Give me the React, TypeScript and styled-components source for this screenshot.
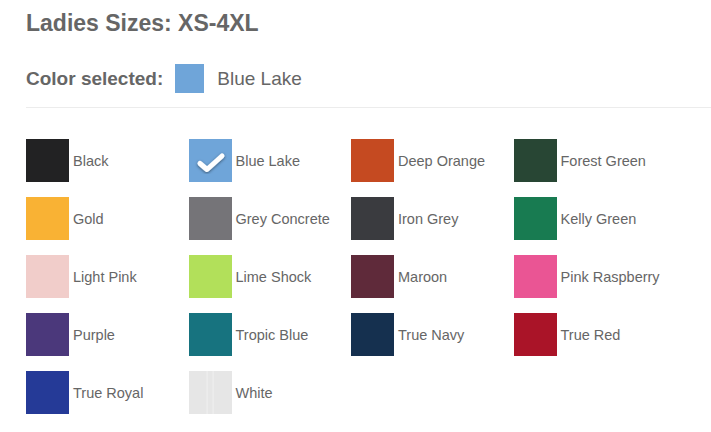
import * as React from 'react';
import styled, { createGlobalStyle } from 'styled-components';

const GlobalStyle = createGlobalStyle`
  html, body {
    margin: 0;
    padding: 0;
    background: #fff;
    font-family: "Liberation Sans", Arial, sans-serif;
    color: #666;
  }
`;

/** Page Wrapper */
const Page = styled.div`
  padding: 9px 0 0 26px;
  overflow: hidden;
`;

const Title = styled.h2`
  margin: 0;
  font-size: 23px;
  line-height: 28px;
  font-weight: bold;
  color: #666;
`;

const SelectedRow = styled.div`
  display: flex;
  align-items: center;
  margin-top: 27px;
  padding-bottom: 14px;
  border-bottom: 1px solid #ececec;
  margin-right: -20px;
`;

const SelectedLabel = styled.strong`
  font-size: 19px;
  color: #666;
`;

const SelectedChip = styled.span<{ $color: string }>`
  display: inline-block;
  width: 29px;
  height: 29px;
  margin: 0 13px 0 12px;
  background: ${(props) => props.$color};
`;

const SelectedName = styled.span`
  font-size: 19px;
  color: #666;
`;

const Grid = styled.ul`
  list-style: none;
  margin: 31px 0 0;
  padding: 0;
  width: 650px;
  display: grid;
  grid-template-columns: repeat(4, 1fr);
  row-gap: 15px;
`;

const Item = styled.li`
  display: flex;
  align-items: center;
  gap: 4px;
  cursor: pointer;
`;

const Swatch = styled.span<{ $color: string; $textured?: boolean }>`
  display: inline-flex;
  align-items: center;
  justify-content: center;
  width: 43px;
  height: 43px;
  flex-shrink: 0;
  background: ${(props) => props.$color};
  ${(props) =>
    props.$textured &&
    `background-image: linear-gradient(90deg, transparent 40%, rgba(255,255,255,0.5) 42%, transparent 44%, transparent 54%, rgba(255,255,255,0.5) 56%, transparent 58%);`}
`;

const Label = styled.span`
  font-size: 14.5px;
  color: #666;
  white-space: nowrap;
`;

interface IColor {
  name: string;
  hex: string;
  textured?: boolean;
}

const colors: IColor[] = [
  { name: 'Black', hex: '#222223' },
  { name: 'Blue Lake', hex: '#6fa5d9' },
  { name: 'Deep Orange', hex: '#c54a21' },
  { name: 'Forest Green', hex: '#284634' },
  { name: 'Gold', hex: '#f9b234' },
  { name: 'Grey Concrete', hex: '#757478' },
  { name: 'Iron Grey', hex: '#3a3b3f' },
  { name: 'Kelly Green', hex: '#187b51' },
  { name: 'Light Pink', hex: '#f1cdca' },
  { name: 'Lime Shock', hex: '#b2e05a' },
  { name: 'Maroon', hex: '#5f2a3a' },
  { name: 'Pink Raspberry', hex: '#ea5594' },
  { name: 'Purple', hex: '#4b387b' },
  { name: 'Tropic Blue', hex: '#17737f' },
  { name: 'True Navy', hex: '#15304f' },
  { name: 'True Red', hex: '#aa1428' },
  { name: 'True Royal', hex: '#253a97' },
  { name: 'White', hex: '#e6e6e6', textured: true },
];

const CheckIcon = () => (
  <svg width="34" height="28" viewBox="0 0 34 28" style={{ marginTop: 4 }}>
    <defs>
      <filter id="shadow" x="-30%" y="-30%" width="160%" height="160%">
        <feDropShadow dx="0" dy="1" stdDeviation="1.4" floodColor="#000" floodOpacity="0.5" />
      </filter>
    </defs>
    <path
      d="M7 14.5 L14 20.5 L29 7"
      fill="none"
      stroke="#fff"
      strokeWidth="5"
      strokeLinecap="round"
      strokeLinejoin="round"
      filter="url(#shadow)"
    />
  </svg>
);

const App: React.FC = () => {
  const [selected, setSelected] = React.useState('Blue Lake');
  const current = colors.find((c) => c.name === selected) || colors[1];

  return (
    <Page>
      <GlobalStyle />
      <Title>Ladies Sizes: XS-4XL</Title>
      <SelectedRow>
        <SelectedLabel>Color selected:</SelectedLabel>
        <SelectedChip $color={current.hex} />
        <SelectedName>{current.name}</SelectedName>
      </SelectedRow>
      <Grid>
        {colors.map((c) => (
          <Item key={c.name} onClick={() => setSelected(c.name)}>
            <Swatch $color={c.hex} $textured={c.textured}>
              {c.name === selected && <CheckIcon />}
            </Swatch>
            <Label>{c.name}</Label>
          </Item>
        ))}
      </Grid>
    </Page>
  );
};

export default App;
